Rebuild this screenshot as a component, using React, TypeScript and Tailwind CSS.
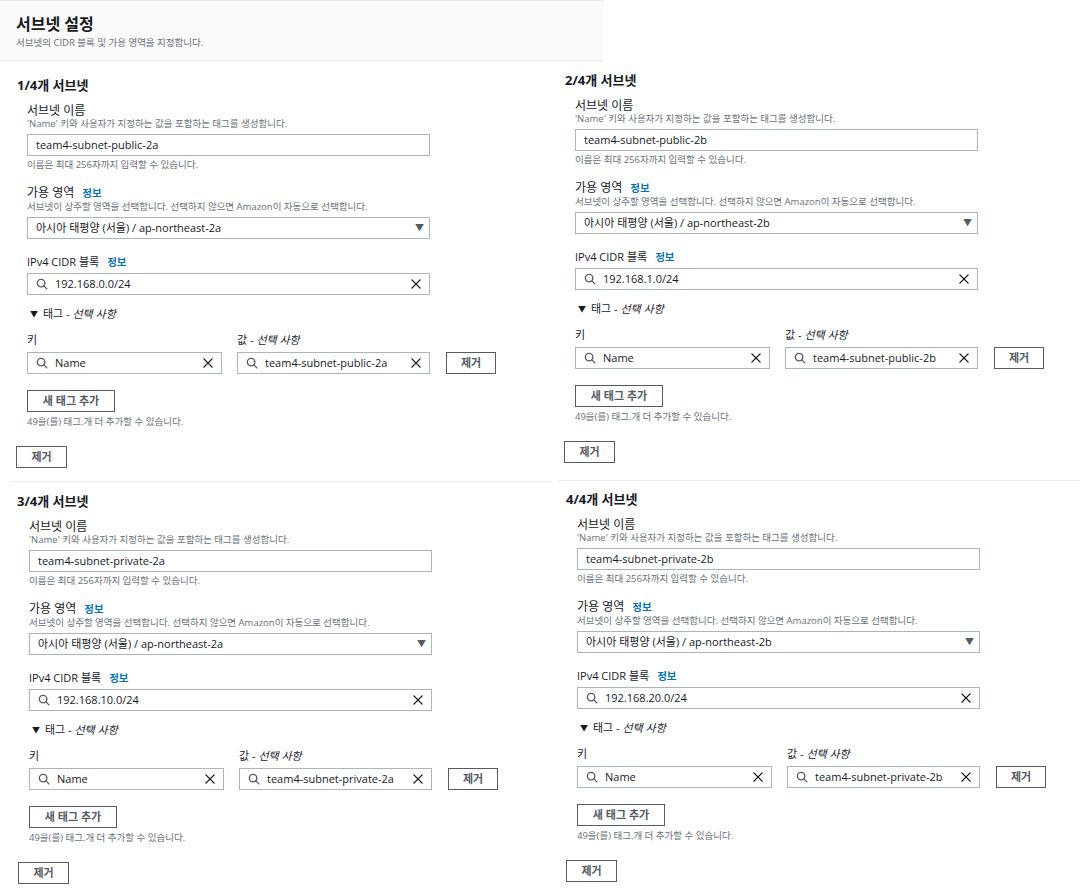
import React from "react";

type PanelProps = {
  idx: string;
  name: string;
  az: string;
  cidr: string;
  indent: string;
  removeShift: string;
};

const SearchIcon = () => (
  <svg width="12" height="12" viewBox="0 0 16 16" fill="none" stroke="#545b64" strokeWidth="1.8" strokeLinecap="round">
    <circle cx="6.8" cy="6.8" r="5" />
    <line x1="10.5" y1="10.5" x2="14.5" y2="14.5" />
  </svg>
);

const XIcon = () => (
  <svg width="12" height="12" viewBox="0 0 16 16" fill="none" stroke="#16191f" strokeWidth="1.8" strokeLinecap="round">
    <line x1="2.5" y1="2.5" x2="13.5" y2="13.5" />
    <line x1="13.5" y1="2.5" x2="2.5" y2="13.5" />
  </svg>
);

function SearchInput({ value, width }: { value: string; width: string }) {
  return (
    <div className={`flex h-[22px] ${width} items-center border border-[#aab7b8] bg-white pl-[8px] pr-[7px]`}>
      <SearchIcon />
      <span className="ml-[7px] flex-1 truncate text-[11px] text-[#16191f]">{value}</span>
      <XIcon />
    </div>
  );
}

function Panel({ idx, name, az, cidr, indent, removeShift }: PanelProps) {
  return (
    <div className="flex flex-col">
      <div className="h-[18px] text-[13px] font-bold leading-[18px] text-[#16191f]">{idx}개 서브넷</div>
      <div className={`flex flex-col ${indent}`}>
        <div className="mt-[10px] h-[14px] text-[12px] leading-[14px] text-[#16191f]">서브넷 이름</div>
        <div className="h-[12px] text-[9.5px] leading-[12px] text-[#687078]">'Name' 키와 사용자가 지정하는 값을 포함하는 태그를 생성합니다.</div>
        <div className="mt-[4px] flex h-[22px] w-[403px] items-center border border-[#aab7b8] bg-white pl-[8px] text-[11px] text-[#16191f]">
          {name}
        </div>
        <div className="mt-[3px] h-[12px] text-[9.5px] leading-[12px] text-[#687078]">이름은 최대 256자까지 입력할 수 있습니다.</div>
        <div className="mt-[15px] flex h-[14px] items-center text-[12px] leading-[14px] text-[#16191f]">
          가용 영역 <span className="ml-[8px] text-[10.5px] font-bold text-[#0073bb]">정보</span>
        </div>
        <div className="mt-[1px] h-[12px] text-[9.5px] leading-[12px] text-[#687078]">
          서브넷이 상주할 영역을 선택합니다. 선택하지 않으면 Amazon이 자동으로 선택합니다.
        </div>
        <div className="mt-[4px] flex h-[22px] w-[403px] items-center justify-between border border-[#aab7b8] bg-white pl-[8px] pr-[5px] text-[11px] text-[#16191f]">
          <span>{az}</span>
          <span className="text-[9px] text-[#545b64]">▼</span>
        </div>
        <div className="mt-[16px] flex h-[14px] items-center text-[11px] leading-[14px] text-[#16191f]">
          IPv4 CIDR 블록 <span className="ml-[8px] text-[10.5px] font-bold text-[#0073bb]">정보</span>
        </div>
        <div className="mt-[4px]">
          <SearchInput value={cidr} width="w-[403px]" />
        </div>
        <div className="mt-[12px] flex h-[14px] items-center pl-[3px] text-[11px] leading-[14px] text-[#16191f]">
          <span className="text-[8px] text-[#16191f]">▼</span>
          <span className="ml-[5px]">
            태그 - <span className="italic">선택 사항</span>
          </span>
        </div>
        <div className="mt-[12px] flex h-[14px] text-[11px] leading-[14px] text-[#16191f]">
          <div className="w-[210px]">키</div>
          <div>
            값 - <span className="italic">선택 사항</span>
          </div>
        </div>
        <div className="mt-[5px] flex items-center">
          <SearchInput value="Name" width="w-[195px]" />
          <div className="ml-[15px]">
            <SearchInput value={name} width="w-[193px]" />
          </div>
          <button className="ml-[16px] flex h-[22px] w-[50px] items-center justify-center border border-[#545b64] bg-white text-[11px] font-bold text-[#545b64]">
            제거
          </button>
        </div>
        <button className="mt-[16px] flex h-[22px] w-[88px] items-center justify-center border border-[#545b64] bg-white text-[11px] font-bold text-[#545b64]">
          새 태그 추가
        </button>
        <div className="mt-[4px] h-[12px] text-[9.5px] leading-[12px] text-[#687078]">49을(를) 태그.개 더 추가할 수 있습니다.</div>
      </div>
      <button
        className={`mt-[18px] flex h-[22px] w-[51px] items-center justify-center border border-[#545b64] bg-white text-[11px] font-bold text-[#545b64] ${removeShift}`}
      >
        제거
      </button>
    </div>
  );
}

export default function App() {
  return (
    <div
      className="h-[889px] w-[1080px] overflow-hidden bg-white"
      style={{ fontFamily: '"Open Sans", "Noto Sans CJK KR", sans-serif' }}
    >
      <div className="h-[61px] w-[603px] border-t border-b border-[#eaeded] bg-[#fafafa] pl-[16px] pt-[13px]">
        <div className="text-[16px] font-bold leading-[20px] text-[#16191f]">서브넷 설정</div>
        <div className="mt-[3px] text-[9.5px] leading-[12px] text-[#687078]">서브넷의 CIDR 블록 및 가용 영역을 지정합니다.</div>
      </div>
      <div className="flex">
        <div className="ml-[11px] flex w-[541px] flex-col">
          <div className="h-[421px] border-b border-[#eaeded] pl-[6px] pt-[15px]">
            <Panel
              idx="1/4"
              name="team4-subnet-public-2a"
              az="아시아 태평양 (서울) / ap-northeast-2a"
              cidr="192.168.0.0/24"
              indent="ml-[10px]"
              removeShift="-ml-[1px]"
            />
          </div>
          <div className="pl-[6px] pt-[10px]">
            <Panel
              idx="3/4"
              name="team4-subnet-private-2a"
              az="아시아 태평양 (서울) / ap-northeast-2a"
              cidr="192.168.10.0/24"
              indent="ml-[12px]"
              removeShift="ml-[1px]"
            />
          </div>
        </div>
        <div className="ml-[6px] flex flex-1 flex-col">
          <div className="h-[420px] border-b border-[#eaeded] pl-[7px] pt-[10px]">
            <Panel
              idx="2/4"
              name="team4-subnet-public-2b"
              az="아시아 태평양 (서울) / ap-northeast-2b"
              cidr="192.168.1.0/24"
              indent="ml-[10px]"
              removeShift="-ml-[1px]"
            />
          </div>
          <div className="pl-[8px] pt-[9px]">
            <Panel
              idx="4/4"
              name="team4-subnet-private-2b"
              az="아시아 태평양 (서울) / ap-northeast-2b"
              cidr="192.168.20.0/24"
              indent="ml-[11px]"
              removeShift="ml-[0px]"
            />
          </div>
        </div>
      </div>
    </div>
  );
}
